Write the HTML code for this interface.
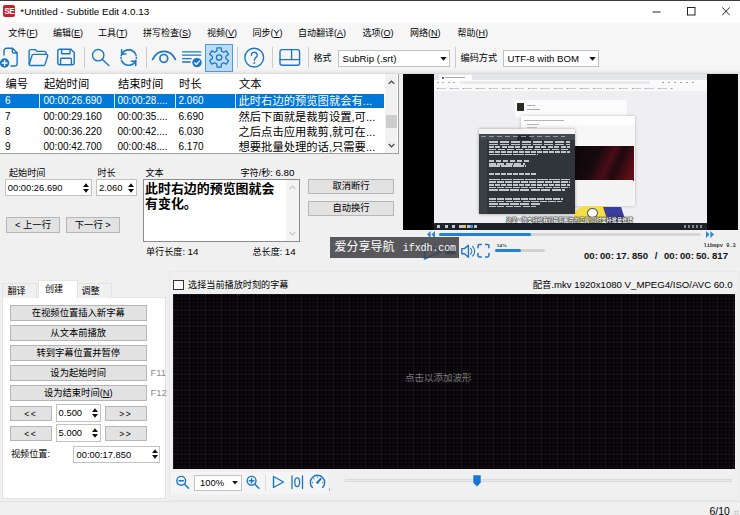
<!DOCTYPE html>
<html lang="zh-CN">
<head>
<meta charset="utf-8">
<title>Subtitle Edit</title>
<style>
html,body{margin:0;padding:0;}
body{width:740px;height:515px;overflow:hidden;background:#f0f0f0;position:relative;
 font-family:"Liberation Sans","Noto Sans CJK SC",sans-serif;font-size:9.3px;color:#000;}
.a{position:absolute;white-space:nowrap;}
.t{position:absolute;white-space:nowrap;line-height:12px;height:12px;}
u{text-decoration:underline;text-underline-offset:1px;}
.btn{position:absolute;box-sizing:border-box;border:1px solid #b6b6b6;background:#e2e2e2;text-align:center;white-space:nowrap;line-height:14px;font-size:9.3px;}
.inp{position:absolute;box-sizing:border-box;border:1px solid #c2c2c2;background:#fff;white-space:nowrap;font-size:9.4px;}
svg{position:absolute;overflow:visible;}
.tm i{display:inline-block;width:5.34px;font-style:normal;text-align:left;}
.sep{position:absolute;width:1px;background:#cacaca;top:46px;height:21px;}
</style>
</head>
<body>
<!-- TITLEBAR -->
<div class="a" id="titlebar" style="left:0;top:0;width:740px;height:22px;background:#fff;">
 <div class="a" style="left:3.2px;top:5px;width:12.2px;height:12.2px;background:#c8202f;border-radius:2px;"></div>
 <div class="a" style="left:3.2px;top:5px;width:12.2px;height:12.2px;line-height:13.2px;text-align:center;color:#fff;font-weight:bold;font-size:8.2px;letter-spacing:-0.5px;">SE</div>
 <div class="t" style="left:20.3px;top:5.8px;font-size:9.9px;">*Untitled - Subtitle Edit 4.0.13</div>
 <svg style="left:650px;top:4px" width="84" height="16" viewBox="0 0 84 16">
  <path d="M2.5 8h8" stroke="#222" stroke-width="1" fill="none"/>
  <rect x="37.5" y="3.5" width="7.5" height="7.5" stroke="#222" stroke-width="1" fill="none"/>
  <path d="M72.2 3.5l7.6 7.6M79.8 3.5l-7.6 7.6" stroke="#222" stroke-width="1" fill="none"/>
 </svg>
</div>
<div class="a" style="left:0;top:0;width:740px;height:1px;background:#3c3c3c;"></div>
<!-- MENUBAR -->
<div class="a" id="menubar" style="left:0;top:22px;width:740px;height:21px;background:linear-gradient(#fafafa,#f6f6f6 3px);">
 <div class="t" style="left:8.25px;top:5px;font-size:9px;">文件(<u>F</u>)</div>
 <div class="t" style="left:53px;top:5px;font-size:9px;">编辑(<u>E</u>)</div>
 <div class="t" style="left:98px;top:5px;font-size:9px;">工具(<u>T</u>)</div>
 <div class="t" style="left:143px;top:5px;font-size:9px;">拼写检查(<u>S</u>)</div>
 <div class="t" style="left:207px;top:5px;font-size:9px;">视频(<u>V</u>)</div>
 <div class="t" style="left:252.5px;top:5px;font-size:9px;">同步(<u>Y</u>)</div>
 <div class="t" style="left:298px;top:5px;font-size:9px;">自动翻译(<u>A</u>)</div>
 <div class="t" style="left:362.5px;top:5px;font-size:9px;">选项(<u>O</u>)</div>
 <div class="t" style="left:410px;top:5px;font-size:9px;">网络(<u>N</u>)</div>
 <div class="t" style="left:457.5px;top:5px;font-size:9px;">帮助(<u>H</u>)</div>
</div>
<!-- TOOLBAR -->
<div class="a" id="toolbar" style="left:0;top:43px;width:740px;height:30px;background:linear-gradient(#f6f6f6 0,#f5f5f5 26px,#e6e6e6 30px);">
<div class="a" style="left:205px;top:1px;width:27.5px;height:27.5px;box-sizing:border-box;background:#bcdcf6;border:1px solid #4a98de;"></div>
<svg style="left:0;top:0" width="340" height="30" viewBox="0 43 340 30" fill="none" stroke="#1b76c4" stroke-width="1.4" stroke-linejoin="round" stroke-linecap="round">
 <!-- new -->
 <path d="M4 55V50.5a2.3 2.3 0 0 1 2.3-2.3h6.2l4.6 4.6v10.9a2.3 2.3 0 0 1-2.3 2.3H11"/>
 <path d="M12.3 48.4v3a1.6 1.6 0 0 0 1.6 1.6h3"/>
 <circle cx="4.6" cy="63" r="4.7" fill="#1b76c4" stroke="none"/>
 <path d="M4.6 60.6v4.8M2.2 63h4.8" stroke="#fff" stroke-width="1.4"/>
 <!-- folder -->
 <path d="M29.1 63.6V51.4a1.8 1.8 0 0 1 1.8-1.8h4.3l2 1.8h7a1.8 1.8 0 0 1 1.8 1.8v1"/>
 <path d="M29.3 64.2l2.7-8.7a1.6 1.6 0 0 1 1.5-1.1h13a1.2 1.2 0 0 1 1.15 1.6l-2.6 8.4a1.6 1.6 0 0 1-1.5 1.1H30.7a1.6 1.6 0 0 1-1.6-1.6"/>
 <!-- save -->
 <path d="M57.8 51.2a1.9 1.9 0 0 1 1.9-1.9h11.2l3.3 3.3v10.2a1.9 1.9 0 0 1-1.9 1.9H59.7a1.9 1.9 0 0 1-1.9-1.9z"/>
 <path d="M61.6 49.5v4.2h8.4v-4.2M60.6 64.5v-5.3a1 1 0 0 1 1-1h8.8a1 1 0 0 1 1 1v5.3"/>
 <!-- search -->
 <circle cx="98.2" cy="55.2" r="5.7"/>
 <path d="M102.4 59.4l6.4 6.2"/>
 <!-- replace -->
 <path d="M121.90 53.99A7.7 7.7 0 0 1 135.50 53.99" stroke-width="1.6"/>
 <path d="M121.70 49.79v4.2h4.2" stroke-width="1.6"/>
 <path d="M121.90 61.21A7.7 7.7 0 0 0 135.50 61.21" stroke-width="1.6"/>
 <path d="M135.70 65.41v-4.2h-4.2" stroke-width="1.6"/>
 <path d="M121.46 54.97A7.7 7.7 0 0 0 121.46 60.23" stroke-dasharray="0.5 2.1" stroke-width="1.6"/>
 <path d="M135.94 54.97A7.7 7.7 0 0 1 135.94 60.23" stroke-dasharray="0.5 2.1" stroke-width="1.6"/>
 <!-- eye -->
 <path d="M152.6 59.4c5.4-10.6 17.4-10.6 22.8 0" stroke-width="1.7"/>
 <circle cx="163.8" cy="58.4" r="3.9" stroke-width="1.7"/>
 <!-- list check -->
 <path d="M182.6 51.8h18.2M182.6 55.2h18.2M182.6 58.6h8.6M182.6 62h7.6" stroke-width="1.3"/>
 <circle cx="197" cy="62.6" r="4.7" fill="#1b76c4" stroke="none"/>
 <path d="M194.8 62.8l1.6 1.7 3-3.4" stroke="#fff" stroke-width="1.3"/>
 <!-- gear -->
 <path d="M216.80 50.99 L217.04 47.82 L221.16 47.82 L221.40 50.99 L223.58 52.25 L226.45 50.87 L228.52 54.45 L225.88 56.24 L225.88 58.76 L228.52 60.55 L226.45 64.13 L223.58 62.75 L221.40 64.01 L221.16 67.18 L217.04 67.18 L216.80 64.01 L214.62 62.75 L211.75 64.13 L209.68 60.55 L212.32 58.76 L212.32 56.24 L209.68 54.45 L211.75 50.87 L214.62 52.25Z" stroke-width="1.3"/>
 <circle cx="219.1" cy="57.5" r="2.7" stroke-width="1.3"/>
 <!-- help -->
 <circle cx="254.2" cy="57.6" r="9.4"/>
 <path d="M251.4 55.2a2.9 2.9 0 1 1 4.4 2.5c-1.1.7-1.5 1.3-1.5 2.6" stroke-width="1.4"/>
 <circle cx="254.3" cy="63" r="0.9" fill="#1b76c4" stroke="none"/>
 <!-- layout -->
 <rect x="280" y="49.6" width="19.6" height="15.6" rx="2.2"/>
 <path d="M280 59.6h19.6M291.6 49.6v10"/>
</svg>
<div class="sep" style="left:83.5px;top:4px"></div>
<div class="sep" style="left:145.5px;top:4px"></div>
<div class="sep" style="left:237px;top:4px"></div>
<div class="sep" style="left:272px;top:4px"></div>
<div class="sep" style="left:307.5px;top:4px"></div>
<div class="sep" style="left:454.5px;top:4px"></div>
<div class="t" style="left:313.5px;top:9px;font-size:9px;">格式</div>
<div class="inp" style="left:337.5px;top:6.5px;width:112px;height:17px;line-height:15px;padding-left:4px;font-size:9.6px;">SubRip (.srt)</div>
<svg style="left:439.5px;top:13.5px" width="7" height="4" viewBox="0 0 7 4"><path d="M0.3 0h6.4L3.5 3.8z" fill="#111"/></svg>
<div class="t" style="left:460.5px;top:9px;font-size:9.2px;">编码方式</div>
<div class="inp" style="left:502.5px;top:6.5px;width:96px;height:17px;line-height:15px;padding-left:4px;font-size:9.6px;">UTF-8 with BOM</div>
<svg style="left:588.5px;top:13.5px" width="7" height="4" viewBox="0 0 7 4"><path d="M0.3 0h6.4L3.5 3.8z" fill="#111"/></svg>
</div>
<div class="a" style="left:0;top:72.5px;width:740px;height:1px;background:#dcdcdc;"></div>
<!-- LIST -->
<div class="a" id="list" style="left:0;top:74px;width:398.3px;height:79.3px;background:#fff;overflow:hidden;border-bottom:1px solid #a0a0a0;border-right:1px solid #a0a0a0;">
 <div class="t" style="left:5.5px;top:3px;font-size:11.3px;line-height:14px;height:14px;">编号</div>
 <div class="t" style="left:44.0px;top:3px;font-size:11.3px;line-height:14px;height:14px;">起始时间</div>
 <div class="t" style="left:118.0px;top:3px;font-size:11.3px;line-height:14px;height:14px;">结束时间</div>
 <div class="t" style="left:179.0px;top:3px;font-size:11.3px;line-height:14px;height:14px;">时长</div>
 <div class="t" style="left:239.0px;top:3px;font-size:11.3px;line-height:14px;height:14px;">文本</div>
 <div class="a" style="left:0;top:19.8px;width:384.3px;height:14.4px;background:#0078d7;"></div>
 <div class="a" style="left:39px;top:19.8px;width:1px;height:14.4px;background:#fff;opacity:.85"></div>
 <div class="a" style="left:113.5px;top:19.8px;width:1px;height:14.4px;background:#fff;opacity:.85"></div>
 <div class="a" style="left:175px;top:19.8px;width:1px;height:14.4px;background:#fff;opacity:.85"></div>
 <div class="a" style="left:234.5px;top:19.8px;width:1px;height:14.4px;background:#fff;opacity:.85"></div>
 <div class="t" style="left:5px;top:20.4px;font-size:10px;line-height:14px;height:14px;color:#fff;">6</div>
 <div class="t" style="left:43.5px;top:20.4px;font-size:10px;line-height:14px;height:14px;color:#fff;">00:00:26.690</div>
 <div class="t" style="left:117.5px;top:20.4px;font-size:10px;line-height:14px;height:14px;color:#fff;">00:00:28....</div>
 <div class="t" style="left:178.5px;top:20.4px;font-size:10px;line-height:14px;height:14px;color:#fff;">2.060</div>
 <div class="t" style="left:238.5px;top:20.4px;font-size:11.3px;line-height:14px;height:14px;color:#fff;">此时右边的预览图就会有...</div>
 <div class="t" style="left:5px;top:35.7px;font-size:10px;line-height:14px;height:14px;color:#000;">7</div>
 <div class="t" style="left:43.5px;top:35.7px;font-size:10px;line-height:14px;height:14px;color:#000;">00:00:29.160</div>
 <div class="t" style="left:117.5px;top:35.7px;font-size:10px;line-height:14px;height:14px;color:#000;">00:00:35....</div>
 <div class="t" style="left:178.5px;top:35.7px;font-size:10px;line-height:14px;height:14px;color:#000;">6.690</div>
 <div class="t" style="left:238.5px;top:35.7px;font-size:11.3px;line-height:14px;height:14px;color:#000;">然后下面就是裁剪设置,可...</div>
 <div class="t" style="left:5px;top:51.0px;font-size:10px;line-height:14px;height:14px;color:#000;">8</div>
 <div class="t" style="left:43.5px;top:51.0px;font-size:10px;line-height:14px;height:14px;color:#000;">00:00:36.220</div>
 <div class="t" style="left:117.5px;top:51.0px;font-size:10px;line-height:14px;height:14px;color:#000;">00:00:42....</div>
 <div class="t" style="left:178.5px;top:51.0px;font-size:10px;line-height:14px;height:14px;color:#000;">6.030</div>
 <div class="t" style="left:238.5px;top:51.0px;font-size:11.3px;line-height:14px;height:14px;color:#000;">之后点击应用裁剪,就可在...</div>
 <div class="t" style="left:5px;top:66.3px;font-size:10px;line-height:14px;height:14px;color:#000;">9</div>
 <div class="t" style="left:43.5px;top:66.3px;font-size:10px;line-height:14px;height:14px;color:#000;">00:00:42.700</div>
 <div class="t" style="left:117.5px;top:66.3px;font-size:10px;line-height:14px;height:14px;color:#000;">00:00:48....</div>
 <div class="t" style="left:178.5px;top:66.3px;font-size:10px;line-height:14px;height:14px;color:#000;">6.170</div>
 <div class="t" style="left:238.5px;top:66.3px;font-size:11.3px;line-height:14px;height:14px;color:#000;">想要批量处理的话,只需要...</div>
 <div class="a" style="left:385px;top:0;width:12.3px;height:80px;background:#f1f1f1;"></div>
 <div class="a" style="left:385.5px;top:40.7px;width:11.3px;height:13.8px;background:#cdcdcd;"></div>
 <svg style="left:384.7px;top:0" width="13" height="80" viewBox="0 0 13 80" fill="none" stroke="#404040" stroke-width="1.2"><path d="M3.7 9.8l2.8-2.8 2.8 2.8M3.7 70l2.8 2.8 2.8-2.8"/></svg>
</div>
<!-- EDIT -->
<div id="edit">
<div class="t" style="left:9px;top:166.5px;font-size:9.1px;">起始时间</div>
<div class="inp" style="left:5px;top:178.6px;width:86.5px;height:17.5px;line-height:15.5px;padding-left:1.8px;">00:00:26.690</div>
<svg style="left:82.5px;top:182.8px" width="6" height="10" viewBox="0 0 6 10"><path d="M0 4L3 0.2 6 4zM0 6L3 9.8 6 6z" fill="#111"/></svg>
<div class="t" style="left:97.5px;top:166.5px;font-size:9.1px;">时长</div>
<div class="inp" style="left:96px;top:178.6px;width:40.5px;height:17.5px;line-height:15.5px;padding-left:2px;">2.060</div>
<svg style="left:127.5px;top:182.8px" width="6" height="10" viewBox="0 0 6 10"><path d="M0 4L3 0.2 6 4zM0 6L3 9.8 6 6z" fill="#111"/></svg>
<div class="btn" style="left:6px;top:217.2px;width:54px;height:15.5px;">&lt; 上一行</div>
<div class="btn" style="left:66px;top:217.2px;width:53.5px;height:15.5px;">下一行 &gt;</div>
<div class="t" style="left:145.5px;top:166.5px;font-size:9.1px;">文本</div>
<div class="t" style="left:240.5px;top:166.5px;font-size:9.1px;">字符/秒: <span style="font-size:9.8px">6.80</span></div>
<div class="inp" style="left:143px;top:179px;width:157px;height:62.5px;border-color:#8c8c8c;"></div>
<div class="a" style="left:145px;top:180.5px;font-size:12.95px;line-height:15.7px;font-weight:bold;">此时右边的预览图就会<br>有变化。</div>
<div class="a" style="left:286px;top:180px;width:13px;height:60.5px;background:#f4f4f4;"></div>
<svg style="left:286px;top:180px" width="13" height="61" viewBox="0 0 13 61" fill="none" stroke="#c4c4c4" stroke-width="1.2"><path d="M3.7 9l2.8-2.8 2.8 2.8M3.7 52l2.8 2.8 2.8-2.8"/></svg>
<div class="t" style="left:146px;top:246.2px;font-size:9.1px;">单行长度: <span style="font-size:9.8px">14</span></div>
<div class="t" style="left:252.5px;top:246.2px;font-size:9.1px;">总长度: <span style="font-size:9.8px">14</span></div>
<div class="btn" style="left:308px;top:179px;width:86px;height:15px;line-height:13.6px;">取消断行</div>
<div class="btn" style="left:308px;top:200.5px;width:86px;height:15px;line-height:13.6px;">自动换行</div>
</div>
<!-- VIDEO -->
<div class="a" id="video" style="left:403px;top:74px;width:335px;height:155.5px;background:#000;overflow:hidden;">
<div class="a" id="vc" style="left:30.5px;top:0;width:273.5px;height:155.5px;background:#efeff2;overflow:hidden;">
 <div class="a" style="left:0;top:0;width:274px;height:5.6px;background:#e4e5e9;"></div>
 <div class="a" style="left:5.5px;top:1.3px;width:33px;height:4.3px;background:#fdfdfd;border-radius:1px 1px 0 0;"></div><div class="a" style="left:8px;top:2.6px;width:2px;height:2px;background:#333;border-radius:50%"></div><div class="a" style="left:11.5px;top:3.2px;width:20px;height:1px;background:#aaa;"></div>
 <div class="a" style="left:0;top:5.6px;width:274px;height:6px;background:#fbfbfb;"></div>
 <div class="a" style="left:26px;top:7px;width:190px;height:3.2px;background:#e9eaed;border-radius:2px;"></div><div class="a" style="left:3px;top:8px;width:18px;height:1.2px;background:repeating-linear-gradient(90deg,#888 0 2px,transparent 2px 5.5px);opacity:.7"></div>
 <div class="a" style="left:0;top:11.6px;width:274px;height:5px;background:#f9f9f9;"></div>
 <div class="a" style="left:3px;top:13.6px;width:236px;height:1.2px;background:repeating-linear-gradient(90deg,#555 0 1.5px,#aaa 1.5px 9px,transparent 9px 13px);opacity:.6"></div>
 <div class="a" style="left:228px;top:8px;width:36px;height:1.4px;background:repeating-linear-gradient(90deg,#777 0 2px,transparent 2px 6px);opacity:.7"></div>
 <!-- card -->
 <div class="a" style="left:81px;top:26px;width:112px;height:17px;background:#fbfbfb;border-radius:2px;"></div>
 <div class="a" style="left:83.3px;top:29.3px;width:7.6px;height:7.6px;background:#2b2b26;"></div>
 <div class="a" style="left:93.5px;top:31px;width:8px;height:1.3px;background:#aaa;"></div>
 <div class="a" style="left:93.5px;top:35px;width:13px;height:1.2px;background:#aaa;"></div>
 <!-- dialog -->
 <div class="a" style="left:87px;top:42px;width:114px;height:90px;background:#f7f7f7;box-shadow:0 0 3px rgba(0,0,0,.25);"></div>
 <div class="a" style="left:87px;top:42px;width:114px;height:9px;background:#fdfdfd;"></div>
 <div class="a" style="left:90px;top:46px;width:40px;height:1px;background:#b5b5b5;"></div>
 <div class="a" style="left:93px;top:49.5px;width:12px;height:1px;background:#b5b5b5;"></div>
 <div class="a" style="left:93px;top:52.5px;width:10px;height:1px;background:#c5c5c5;"></div>
 <div class="a" style="left:141px;top:71.5px;width:59px;height:35.5px;background:linear-gradient(115deg,#0d0709 0%,#160a0e 35%,#4a0d18 55%,#1e090d 68%,#5e1019 90%,#6a121c 100%);"></div>
 <div class="a" style="left:141px;top:106px;width:58px;height:25px;background:#f3f3f3;"></div>
 <!-- cartoon -->
 <div class="a" style="left:140.5px;top:132px;width:36px;height:18px;background:#f3df45;border-radius:12px 3px 0 0;"></div>
 <div class="a" style="left:172px;top:133px;width:18px;height:18px;background:#383c9c;transform:skewX(18deg);"></div>
 <div class="a" style="left:153px;top:133.5px;width:9.5px;height:8.5px;background:#fff;border:0.6px solid #555;border-radius:50%;"></div>
 <!-- terminal -->
 <div class="a" style="left:45px;top:54.5px;width:96px;height:85px;background:#2f3539;box-shadow:0 0 3px rgba(0,0,0,.35);"></div>
 <div class="a" style="left:45px;top:54.5px;width:96px;height:5.5px;background:#f4f4f4;"></div>
 <div class="a" style="left:45px;top:60px;width:96px;height:5.5px;background:#444b50;"></div><div class="a" style="left:83px;top:60.5px;width:14px;height:5px;background:#252a2e;"></div>
 <div class="a" style="left:47px;top:62.2px;width:84px;height:1.2px;background:repeating-linear-gradient(90deg,#b8bec2 0 5px,transparent 5px 8px);opacity:.7"></div>
 <div class="a" style="left:45px;top:65.5px;width:8px;height:74px;background:#3a4146;"></div>
 <div class="a" style="left:55px;top:66.9px;width:81px;height:1.7px;background:repeating-linear-gradient(90deg,#e6ebee 0 9px,transparent 9px 11px);opacity:.8"></div><div class="a" style="left:55px;top:69.5px;width:81px;height:1.7px;background:repeating-linear-gradient(90deg,#e6ebee 0 9px,transparent 9px 11px);opacity:.8"></div><div class="a" style="left:55px;top:72.0px;width:81px;height:1.7px;background:repeating-linear-gradient(90deg,#e6ebee 0 5px,transparent 5px 6.5px);opacity:.8"></div><div class="a" style="left:55px;top:74.6px;width:81px;height:1.7px;background:repeating-linear-gradient(90deg,#e6ebee 0 7px,transparent 7px 9px);opacity:.8"></div><div class="a" style="left:55px;top:77.1px;width:81px;height:1.7px;background:repeating-linear-gradient(90deg,#e6ebee 0 5px,transparent 5px 6px);opacity:.8"></div><div class="a" style="left:55px;top:79.7px;width:49px;height:1.7px;background:repeating-linear-gradient(90deg,#e6ebee 0 11px,transparent 11px 12px);opacity:.8"></div><div class="a" style="left:55px;top:86.3px;width:40px;height:1.7px;background:repeating-linear-gradient(90deg,#e6ebee 0 5px,transparent 5px 7px);opacity:.8"></div><div class="a" style="left:55px;top:88.9px;width:36px;height:1.7px;background:repeating-linear-gradient(90deg,#e6ebee 0 7px,transparent 7px 8.5px);opacity:.8"></div><div class="a" style="left:55px;top:91.4px;width:37px;height:1.7px;background:repeating-linear-gradient(90deg,#e6ebee 0 11px,transparent 11px 12px);opacity:.8"></div><div class="a" style="left:55px;top:99.4px;width:48px;height:1.7px;background:repeating-linear-gradient(90deg,#e6ebee 0 5px,transparent 5px 6px);opacity:.8"></div><div class="a" style="left:55px;top:104.8px;width:81px;height:1.7px;background:repeating-linear-gradient(90deg,#e6ebee 0 11px,transparent 11px 12px);opacity:.8"></div><div class="a" style="left:55px;top:107.4px;width:81px;height:1.7px;background:repeating-linear-gradient(90deg,#e6ebee 0 7px,transparent 7px 8px);opacity:.8"></div><div class="a" style="left:55px;top:109.9px;width:81px;height:1.7px;background:repeating-linear-gradient(90deg,#e6ebee 0 5px,transparent 5px 6px);opacity:.8"></div><div class="a" style="left:55px;top:112.5px;width:81px;height:1.7px;background:repeating-linear-gradient(90deg,#e6ebee 0 7px,transparent 7px 8px);opacity:.8"></div><div class="a" style="left:55px;top:115.0px;width:76px;height:1.7px;background:repeating-linear-gradient(90deg,#e6ebee 0 9px,transparent 9px 10.5px);opacity:.8"></div><div class="a" style="left:55px;top:124.2px;width:74px;height:1.7px;background:repeating-linear-gradient(90deg,#e6ebee 0 7px,transparent 7px 8px);opacity:.8"></div><div class="a" style="left:55px;top:126.8px;width:73px;height:1.7px;background:repeating-linear-gradient(90deg,#e6ebee 0 7px,transparent 7px 8.5px);opacity:.8"></div><div class="a" style="left:55px;top:129.3px;width:51px;height:1.7px;background:repeating-linear-gradient(90deg,#e6ebee 0 9px,transparent 9px 10.5px);opacity:.8"></div><div class="a" style="left:55px;top:131.8px;width:47px;height:1.7px;background:repeating-linear-gradient(90deg,#e6ebee 0 7px,transparent 7px 8.5px);opacity:.8"></div>
 <!-- taskbar -->
 <div class="a" style="left:0;top:149px;width:274px;height:6.5px;background:#1d2129;"></div>
 <div class="a" style="left:3px;top:150.5px;width:45px;height:3.5px;background:repeating-linear-gradient(90deg,#dfe3e8 0 3px,transparent 3px 7.5px);opacity:.85"></div>
 <div class="a" style="left:29px;top:150.5px;width:3px;height:3.5px;background:#e8c53a;"></div>
 <div class="a" style="left:36.5px;top:150.5px;width:3px;height:3.5px;background:#3a9be8;"></div>
 <div class="a" style="left:250px;top:151px;width:20px;height:2.5px;background:repeating-linear-gradient(90deg,#c8ccd2 0 2px,transparent 2px 4px);opacity:.6"></div>
 <!-- subtitle -->
 <div class="a" style="left:72.5px;top:142.5px;width:127px;text-align:center;font-size:5.2px;line-height:7px;color:#fff;font-weight:bold;text-shadow:0 0 1.2px #000,0 0 1.2px #000,0 0 1.2px #000;">这是一款支持给我们裁剪图片的工具,同时支持批量处理</div>
</div>
</div>
<!-- VIDEO CONTROLS -->
<div id="vctl">
<div class="a" style="left:439px;top:232.6px;width:262px;height:3px;background:#d6d6d6;border-radius:1.5px;"></div>
<div class="a" style="left:439px;top:232.6px;width:91.5px;height:3px;background:#1f82d8;border-radius:1.5px;"></div>
<svg style="left:425.5px;top:230px" width="10" height="9" viewBox="0 0 10 9"><path d="M4.6 1L1 4.5l3.6 3.5zM9 1L5.4 4.5 9 8z" fill="#2b86d9"/></svg>
<svg style="left:704.5px;top:230px" width="10" height="9" viewBox="0 0 10 9"><path d="M1 1l3.6 3.5L1 8zM5.4 1L9 4.5 5.4 8z" fill="#2b86d9"/></svg>
<svg style="left:422px;top:242px" width="72" height="19" viewBox="422 242 72 19" fill="none" stroke="#1b76c4" stroke-width="1.4" stroke-linejoin="round" stroke-linecap="round">
 <path d="M424.5 244v15l16.5-7.5z" stroke-width="1.6"/>
 <rect x="445.5" y="245.5" width="10" height="9" rx="1" fill="#1d4f80" stroke="none"/>
 <path d="M461.8 248.6h2.6l4-3.4v12l-4-3.4h-2.6z"/>
 <path d="M470.6 248.4a4 4 0 0 1 0 5.6M472.6 246.4a6.6 6.6 0 0 1 0 9.6" stroke-width="1.1"/>
 <path d="M478 247.8v-2a1.3 1.3 0 0 1 1.3-1.3h2M485.6 244.5h2a1.3 1.3 0 0 1 1.3 1.3v2M488.9 253.6v2a1.3 1.3 0 0 1-1.3 1.3h-2M481.3 256.9h-2a1.3 1.3 0 0 1-1.3-1.3v-2" stroke-width="1.5"/>
</svg>
<div class="a" style="left:495px;top:249px;width:49.5px;height:3px;background:#d2d2d2;border-radius:1.5px;"></div>
<div class="a" style="left:495px;top:249px;width:26px;height:3px;background:#1f82d8;border-radius:1.5px;"></div>
<div class="a" style="left:497px;top:241.5px;font-family:'Liberation Serif',serif;font-size:5px;line-height:7px;font-weight:bold;color:#222;">54%</div>
<div class="a" style="left:703.5px;top:242.5px;font-family:'Liberation Mono',monospace;font-size:5.4px;line-height:7px;font-weight:bold;color:#333;letter-spacing:0;">libmpv 0.3</div>
<div class="a tm" style="left:584px;top:249.6px;font-size:9.6px;line-height:12px;font-weight:bold;color:#111;">00<i>:</i>00<i>:</i>17<i>.</i>850<i>&nbsp;</i><i style="text-align:center">/</i><i>&nbsp;</i>00<i>:</i>00<i>:</i>50<i>.</i>817</div>
<!-- watermark -->
<div class="a" style="left:330px;top:237.2px;width:128.8px;height:20.6px;background:rgba(66,66,70,.87);"></div>
<div class="a" style="left:334.5px;top:236.5px;height:21px;line-height:21px;color:#fff;font-size:12px;font-family:'Liberation Sans','Noto Sans CJK SC',sans-serif;">爱分享导航 <span style="font-family:'Liberation Mono',monospace;font-size:10px;letter-spacing:-0.1px;position:relative;left:5px;top:0.5px">ifxdh.com</span></div>
</div>
<!-- TABS -->
<div id="tabs">
<div class="a" style="left:2px;top:297px;width:164px;height:201.5px;box-sizing:border-box;background:#fff;border:1px solid #e3e3e3;"></div>
<div class="a" style="left:2px;top:282.5px;width:35px;height:15px;box-sizing:border-box;background:#f0f0f0;border:1px solid #e3e3e3;border-bottom:none;"></div>
<div class="a" style="left:77px;top:282.5px;width:35px;height:15px;box-sizing:border-box;background:#f0f0f0;border:1px solid #e3e3e3;border-bottom:none;border-left:none;"></div>
<div class="a" style="left:38px;top:280px;width:39.5px;height:18px;box-sizing:border-box;background:#fff;border:1px solid #e3e3e3;border-bottom:none;"></div>
<div class="t" style="left:7.5px;top:284.5px;font-size:9.1px;">翻译</div>
<div class="t" style="left:45px;top:283px;font-size:9.1px;">创建</div>
<div class="t" style="left:81.5px;top:284.5px;font-size:9.1px;">调整</div>
<div class="btn" style="left:10px;top:305px;width:136.5px;height:16px;">在视频位置插入新字幕</div>
<div class="btn" style="left:10px;top:325px;width:136.5px;height:16px;">从文本前播放</div>
<div class="btn" style="left:10px;top:345px;width:136.5px;height:16px;">转到字幕位置并暂停</div>
<div class="btn" style="left:10px;top:365px;width:136.5px;height:16px;">设为起始时间</div>
<div class="btn" style="left:10px;top:385px;width:136.5px;height:16px;">设为结束时间(<u>N</u>)</div>
<div class="t" style="left:150.5px;top:367px;font-size:9.4px;color:#8a8a8a;">F11</div>
<div class="t" style="left:150.5px;top:387px;font-size:9.4px;color:#8a8a8a;">F12</div>
<div class="btn" style="left:10px;top:405.6px;width:41.5px;height:15.5px;line-height:15.5px;font-size:8.6px;letter-spacing:1.5px;">&lt;&lt;</div>
<div class="btn" style="left:105px;top:405.6px;width:41.5px;height:15.5px;line-height:15.5px;font-size:8.6px;letter-spacing:1.5px;">&gt;&gt;</div>
<div class="inp" style="left:56px;top:404px;width:44.5px;height:17.5px;line-height:15.5px;padding-left:1.6px;">0.500</div>
<svg style="left:91.5px;top:407.8px" width="6" height="10" viewBox="0 0 6 10"><path d="M0 4L3 0.2 6 4zM0 6L3 9.8 6 6z" fill="#111"/></svg>
<div class="btn" style="left:10px;top:425.6px;width:41.5px;height:15.5px;line-height:15.5px;font-size:8.6px;letter-spacing:1.5px;">&lt;&lt;</div>
<div class="btn" style="left:105px;top:425.6px;width:41.5px;height:15.5px;line-height:15.5px;font-size:8.6px;letter-spacing:1.5px;">&gt;&gt;</div>
<div class="inp" style="left:56px;top:424px;width:44.5px;height:17.5px;line-height:15.5px;padding-left:1.6px;">5.000</div>
<svg style="left:91.5px;top:427.8px" width="6" height="10" viewBox="0 0 6 10"><path d="M0 4L3 0.2 6 4zM0 6L3 9.8 6 6z" fill="#111"/></svg>
<div class="t" style="left:11px;top:448px;font-size:9.1px;">视频位置:</div>
<div class="inp" style="left:73px;top:445.5px;width:87px;height:17.5px;line-height:15.5px;padding-left:2.5px;">00:00:17.850</div>
<svg style="left:151.5px;top:449.3px" width="6" height="10" viewBox="0 0 6 10"><path d="M0 4L3 0.2 6 4zM0 6L3 9.8 6 6z" fill="#111"/></svg>
</div>
<!-- RIGHT GROUP -->
<div id="rgrp">
<div class="a" style="left:168.5px;top:271px;width:570px;height:229.5px;box-sizing:border-box;border:1px solid #e9e9e9;border-radius:2px;"></div>
<div class="a" style="left:172.5px;top:279.5px;width:11px;height:10.5px;box-sizing:border-box;border:1px solid #333;background:#fff;"></div>
<div class="t" style="left:188px;top:279px;font-size:9.15px;">选择当前播放时刻的字幕</div>
<div class="t" style="right:7.5px;top:278.5px;font-size:9.65px;"><span style="font-size:9.3px">配音</span>.mkv 1920x1080 V_MPEG4/ISO/AVC 60.0</div>
<div class="a" style="left:171px;top:472px;width:157px;height:21.5px;background:#f5f5f5;"></div><div class="a" style="left:328.6px;top:488px;width:1px;height:2.5px;background:#b0b0b0;"></div>
<svg style="left:170px;top:472px" width="170" height="22" viewBox="170 472 170 22" fill="none" stroke="#1b76c4" stroke-width="1.4" stroke-linecap="round" stroke-linejoin="round">
 <circle cx="181.2" cy="480.8" r="4.4"/><path d="M184.5 484.2l4 4M179 480.8h4.4" />
 <circle cx="251.6" cy="480.8" r="4.4"/><path d="M254.9 484.2l4 4M249.4 480.8h4.4M251.6 478.6v4.4"/>
 <path d="M273.5 476.5v11l10-5.5z"/>
 <path d="M292 476v12.5M302.5 476v12.5" stroke-width="1.3"/><ellipse cx="297.2" cy="482.2" rx="2.4" ry="4.3" stroke-width="1.3"/>
 <path d="M312.4 487.6a7.2 7.2 0 1 1 10.2 0"/><path d="M317.5 482.5l3.2-3.6" stroke-width="2"/><circle cx="317.5" cy="482.6" r="1.2" fill="#1b76c4" stroke="none"/>
 <path d="M317.5 477v.3M312.2 482.6h.3M322.6 482.6h.3M313.8 478.8l.2.2" stroke-width="1.1"/>
</svg>
<div class="a" style="left:265px;top:474.5px;width:1px;height:16px;background:#dcdcdc;"></div>
<div class="inp" style="left:194px;top:475px;width:47.5px;height:15.5px;line-height:13.5px;padding-left:5px;font-size:9.4px;">100%</div>
<svg style="left:232px;top:481px" width="6" height="4" viewBox="0 0 6 4"><path d="M0.2 0h5.6L3 3.4z" fill="#111"/></svg>
<div class="a" style="left:345px;top:479px;width:387px;height:2.5px;box-sizing:border-box;background:#e9e9e9;border:0.5px solid #dadada;"></div>
<svg style="left:473px;top:475px" width="8" height="12" viewBox="0 0 8 12"><path d="M0.3 0.3h7.4v7.4L4 11.6 0.3 7.7z" fill="#1678d4"/></svg>
</div>
<!-- STATUS -->
<div class="a" style="left:0;top:500.8px;width:740px;height:1px;background:#e3e3e3;"></div>
<div class="t" style="left:709.5px;top:505.6px;font-size:10.4px;">6/10</div>
<div class="a" style="left:734px;top:510px;width:5px;height:5px;background:radial-gradient(circle,#aaa 0.7px,transparent 0.9px) 0 0/2.5px 2.5px;"></div>
<!-- WAVE -->
<div class="a" id="wave" style="left:173px;top:294px;width:562px;height:175px;background:#070408;background-image:linear-gradient(rgba(210,180,235,.05) 1px,transparent 1px),linear-gradient(90deg,rgba(210,180,235,.05) 1px,transparent 1px),linear-gradient(rgba(210,180,235,.035) 1px,transparent 1px),linear-gradient(90deg,rgba(210,180,235,.035) 1px,transparent 1px);background-size:16px 16px,16px 16px,4px 4px,4px 4px;">
 <div class="t" style="left:232px;top:77.5px;font-size:9.5px;color:#787878;">点击以添加波形</div>
</div>
</body>
</html>
